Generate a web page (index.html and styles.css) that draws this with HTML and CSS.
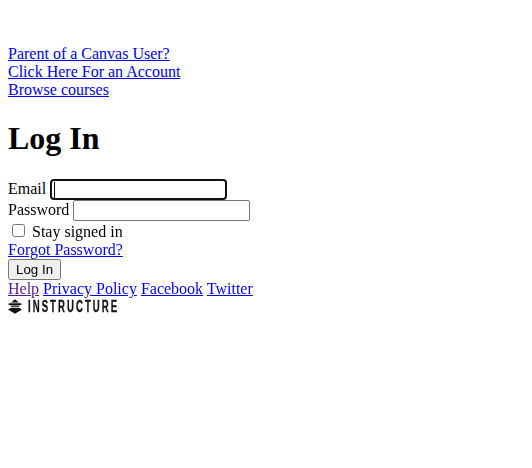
FILE: index.html
```html
<!DOCTYPE html>
<html lang="en">
<head>
  <meta charset="UTF-8">
  <title>Log In</title>
  <link rel="stylesheet" href="styles.css">
</head>
<body>
  <div class="top-links">
    <div><a href="#">Parent of a Canvas User?</a></div>
    <div><a href="#">Click Here For an Account</a></div>
    <div><a href="#">Browse courses</a></div>
  </div>

  <h1>Log In</h1>

  <form>
    <div>
      <label for="email">Email</label>
      <input type="text" id="email" class="field field-focus" name="email" autofocus>
    </div>
    <div>
      <label for="password">Password</label>
      <input type="password" id="password" class="field" name="password">
    </div>
    <div>
      <input type="checkbox" id="stay" name="stay">
      <label for="stay">Stay signed in</label>
    </div>
    <div><a href="#">Forgot Password?</a></div>
    <div><button type="button" class="btn">Log In</button></div>
  </form>

  <div class="footer-links">
    <a href="#" class="visited">Help</a>
    <a href="#">Privacy Policy</a>
    <a href="#">Facebook</a>
    <a href="#">Twitter</a>
  </div>

  <div class="logo">
    <svg class="logo-mark" width="14" height="15" viewBox="0 0 14 15">
      <path d="M7 0.2 L11 3.6 H3 Z"></path>
      <path d="M1.2 4.2 H12.8 L14 5.2 L11.2 6.4 H2.8 L0 5.2 Z"></path>
      <rect x="3" y="7.2" width="8" height="1"></rect>
      <path d="M2.8 9 H11.2 L14 10.4 L7 14.8 L0 10.4 Z"></path>
    </svg>
    <span class="logo-text">INSTRUCTURE</span>
  </div>
</body>
</html>
```

FILE: styles.css
```css
body {
  margin: 8px;
  padding-top: 37px;
  font-family: "Liberation Serif", serif;
  font-size: 16px;
  background: #ffffff;
  color: #000000;
}

a {
  color: #0000ee;
}

a.visited {
  color: #551a8b;
}

input,
button {
  font-family: "Liberation Sans", Arial, sans-serif;
}

.field {
  width: 177px;
  box-sizing: border-box;
}

/* the text cursor does not show in a still picture */
.field-focus {
  background: linear-gradient(#000000, #000000) no-repeat 2px 1px / 1px 16px #ffffff;
}

.btn {
  font-size: 13.33px;
}

.logo {
  display: flex;
  align-items: center;
  gap: 6px;
  height: 18px;
}

.logo-mark {
  fill: #111111;
}

.logo-text {
  font-family: "Liberation Sans", Arial, sans-serif;
  font-size: 16px;
  font-weight: bold;
  letter-spacing: 3.4px;
  color: #111111;
  -webkit-text-stroke: 0.3px #111111;
  display: inline-block;
  transform: scaleX(0.6);
  transform-origin: left center;
}
```
